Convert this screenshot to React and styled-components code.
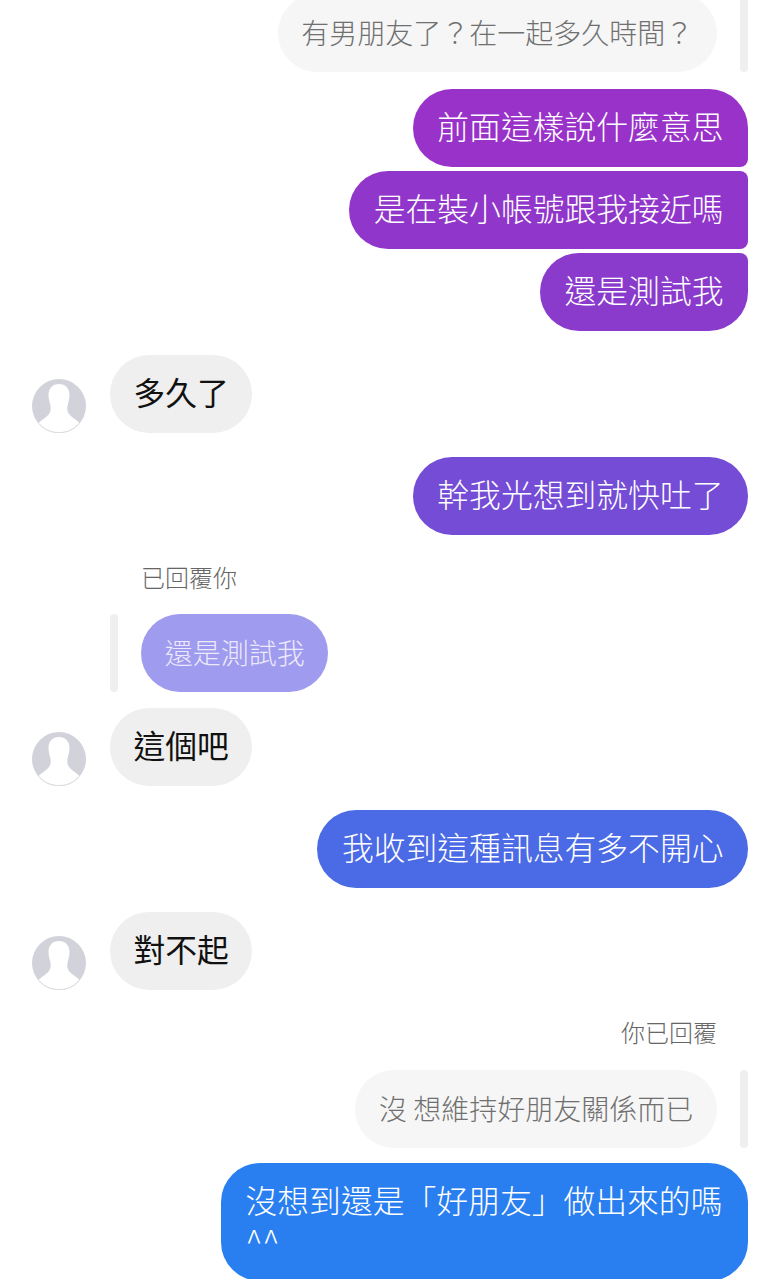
import React from "react"
import styled, { createGlobalStyle } from "styled-components"

const GlobalStyle = createGlobalStyle`
  html, body {
    margin: 0;
    padding: 0;
    background: #fff;
  }
  body {
    height: 1279px;
    overflow: hidden;
    font-family: "Noto Sans CJK TC", "Liberation Sans", sans-serif;
  }
`

const Thread = styled.div`
  display: flex;
  flex-direction: column;
  margin-top: -6px;
  padding: 0 16px 0 32px;
`

const Row = styled.div`
  display: flex;
  align-items: ${(p) => (p.$side === "left" ? "flex-end" : "stretch")};
  justify-content: ${(p) => (p.$side === "left" ? "flex-start" : "flex-end")};
  margin-top: ${(p) => p.$gap || 0}px;
`

const QuoteRow = styled(Row)`
  align-items: stretch;
  gap: 23px;
  padding-left: ${(p) => (p.$side === "left" ? "78px" : "0")};
`

const Bubble = styled.div`
  box-sizing: border-box;
  min-height: 78px;
  padding: 16px 24.5px 22px;
  max-width: 527px;
  font-size: 31.8px;
  line-height: 40px;
  font-weight: 300;
  color: ${(p) => p.$color || "#fff"};
  background: ${(p) => p.$bg};
  border-radius: ${(p) => p.$radius || "39px"};
`

const LeftBubble = styled(Bubble)`
  margin-left: 24px;
  padding-left: 23.5px;
  padding-right: 23.5px;
  font-weight: 400;
  background: #efefef;
  color: #111;
`

const QuoteBubble = styled.div`
  box-sizing: border-box;
  height: 78px;
  padding: 18px 23.7px 20px;
  font-size: 28px;
  line-height: 40px;
  font-weight: 300;
  white-space: pre;
  border-radius: 39px;
  color: ${(p) => p.$color};
  background: ${(p) => p.$bg};
`

const QuoteBar = styled.div`
  width: 8px;
  border-radius: 4px;
  background: #efefef;
`

const ReplyLabel = styled.div`
  font-size: 24px;
  line-height: 32px;
  font-weight: 300;
  color: #666;
  margin-top: ${(p) => p.$gap}px;
  margin-left: ${(p) => p.$left || 0}px;
  margin-right: ${(p) => p.$right || 0}px;
  text-align: ${(p) => (p.$right ? "right" : "left")};
`

const AvatarSvg = styled.svg`
  display: block;
  flex: none;
  width: 54px;
  height: 54px;
`

const Avatar = ({ id }) => (
  <AvatarSvg viewBox="0 0 54 54">
    <defs>
      <clipPath id={id}>
        <circle cx="27" cy="27" r="26.5" />
      </clipPath>
    </defs>
    <circle cx="27" cy="27" r="27" fill="#d2d3da" />
    <path
      clipPath={`url(#${id})`}
      d="M27 5c-6.500 0-10.500 4.500-10.500 11 0 4.500 1.500 8 2 11 0.500 3 0.200 5.500-1.500 8-2 3-6 5-10 8.500v11h40v-11c-4-3.500-8-5.500-10-8.500-1.700-2.500-2-5-1.500-8 0.500-3 2-6.500 2-11C37.500 9.500 33.500 5 27 5z"
      fill="#fff"
    />
    <path d="M7 44.500C12 51 19 53.500 27 53.500S42 51 47 44.500" fill="none" stroke="#dcdde2" strokeWidth="1" />
  </AvatarSvg>
)

const FirstInGroup = "39px 39px 8px 39px"
const MiddleInGroup = "39px 8px 8px 39px"
const LastInGroup = "39px 8px 39px 39px"

export default function App() {
  return (
    <>
      <GlobalStyle />
      <Thread>
        <QuoteRow $side="right">
          <QuoteBubble $bg="#f6f6f6" $color="#707070">有男朋友了？在一起多久時間？</QuoteBubble>
          <QuoteBar />
        </QuoteRow>

        <Row $side="right" $gap={17}>
          <Bubble $bg="#9932c9" $radius={FirstInGroup}>前面這樣說什麼意思</Bubble>
        </Row>
        <Row $side="right" $gap={4}>
          <Bubble $bg="#9136ca" $radius={MiddleInGroup}>是在裝小帳號跟我接近嗎</Bubble>
        </Row>
        <Row $side="right" $gap={4}>
          <Bubble $bg="#8a3bcc" $radius={LastInGroup}>還是測試我</Bubble>
        </Row>

        <Row $side="left" $gap={24}>
          <Avatar id="avatar-a" />
          <LeftBubble>多久了</LeftBubble>
        </Row>

        <Row $side="right" $gap={24}>
          <Bubble $bg="#744cd6">幹我光想到就快吐了</Bubble>
        </Row>

        <ReplyLabel $gap={26} $left={109}>已回覆你</ReplyLabel>
        <QuoteRow $side="left" $gap={21}>
          <QuoteBar />
          <QuoteBubble $bg="#9f9bee" $color="#ebe9fb">還是測試我</QuoteBubble>
        </QuoteRow>

        <Row $side="left" $gap={16}>
          <Avatar id="avatar-b" />
          <LeftBubble>這個吧</LeftBubble>
        </Row>

        <Row $side="right" $gap={24}>
          <Bubble $bg="#4b6ae5">我收到這種訊息有多不開心</Bubble>
        </Row>

        <Row $side="left" $gap={24}>
          <Avatar id="avatar-c" />
          <LeftBubble>對不起</LeftBubble>
        </Row>

        <ReplyLabel $gap={26} $right={31}>你已回覆</ReplyLabel>
        <QuoteRow $side="right" $gap={22}>
          <QuoteBubble $bg="#f6f6f6" $color="#707070">沒 想維持好朋友關係而已</QuoteBubble>
          <QuoteBar />
        </QuoteRow>

        <Row $side="right" $gap={15}>
          <Bubble $bg="#2a7ff0">沒想到還是「好朋友」做出來的嗎 ^^</Bubble>
        </Row>
      </Thread>
    </>
  )
}
